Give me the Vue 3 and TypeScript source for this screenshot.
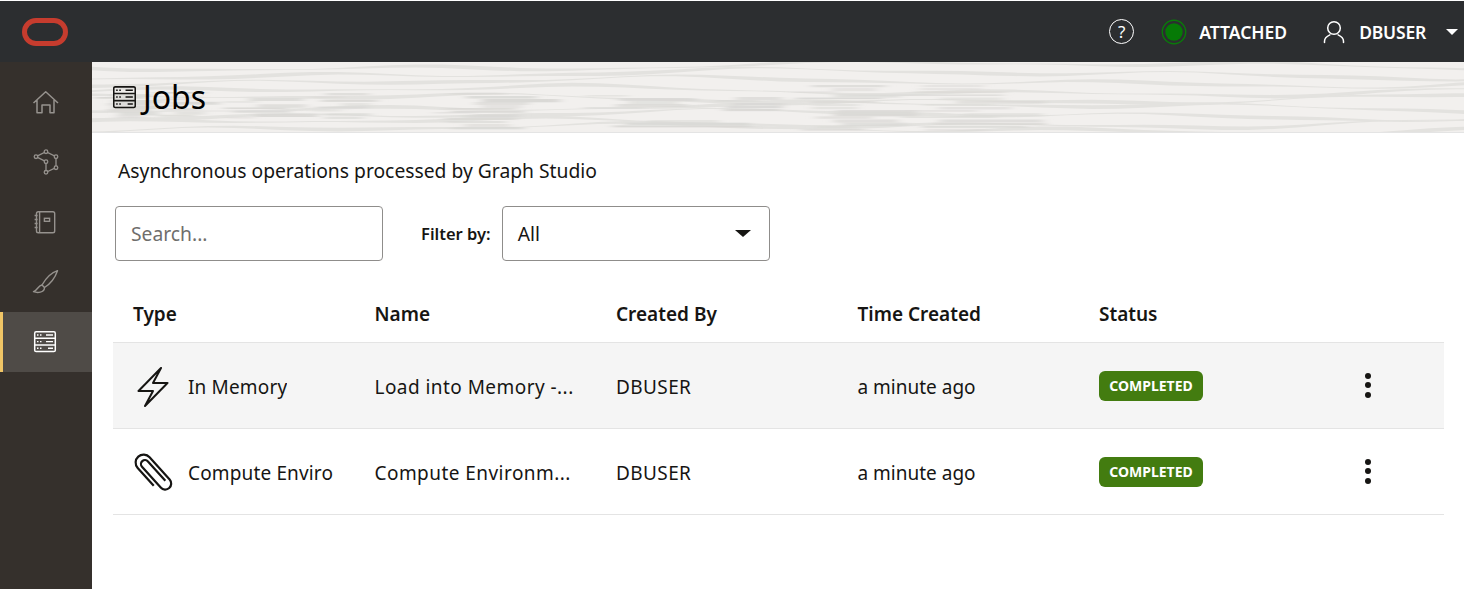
<script setup lang="ts">
interface Job { type: string; name: string; by: string; time: string; icon: 'bolt' | 'clip'; hover: boolean }
const jobs: Job[] = [
  { type: 'In Memory', name: 'Load into Memory -...', by: 'DBUSER', time: 'a minute ago', icon: 'bolt', hover: true },
  { type: 'Compute Enviro', name: 'Compute Environm...', by: 'DBUSER', time: 'a minute ago', icon: 'clip', hover: false }
]
const columns = ['Type', 'Name', 'Created By', 'Time Created', 'Status']

function rnd(n: number): number {
  const v = Math.sin(n * 127.1 + 311.7) * 43758.5453
  return v - Math.floor(v)
}
function band(base: number, seed: number): string {
  const top: string[] = []
  const bottom: string[] = []
  for (let x = -40; x <= 1420; x += 26) {
    const y = base
      + Math.sin(x / 71 + seed) * 2.4
      + Math.sin(x / 33 + seed * 2.3) * 0.9
      + Math.sin(x / 203 + seed * 0.7) * 3.4
    const t = 0.9 + 1.4 * (1 + Math.sin(x / 58 + seed * 3.1))
    top.push(`${x} ${(y - t / 2).toFixed(1)}`)
    bottom.unshift(`${x} ${(y + t / 2).toFixed(1)}`)
  }
  return `M${top.join('L')}L${bottom.join('L')}Z`
}
const bands = [
  [4, 0.4], [12, 1.6], [20, 2.7], [29, 3.9], [37, 5.0], [45, 0.9], [53, 2.1], [61, 4.4], [67, 3.2]
].map(([y, s]) => band(y, s))

interface Streak { x: number; y: number; w: number; h: number; o: number }
const regions = [
  [0, 32, 60, 24], [60, 30, 60, 26], [130, 36, 80, 22], [219, 31, 70, 27], [353, 31, 92, 24], [491, 33, 107, 15],
  [621, 35, 70, 15], [701, 23, 110, 47], [808, 23, 160, 47], [340, 50, 100, 18], [500, 58, 170, 8]
]
const streaks: Streak[] = []
regions.forEach(([rx, ry, rw, rh], r) => {
  const n = Math.round(rh / 3.2)
  for (let i = 0; i < n; i++) {
    const a = rnd(r * 17 + i)
    const b = rnd(r * 31 + i + 5)
    streaks.push({
      x: rx + a * rw * 0.45,
      y: ry + (i / n) * rh,
      w: rw * (0.35 + b * 0.5),
      h: 1.5 + a * 2,
      o: 0.45 + b * 0.5
    })
  }
})
</script>

<template>
  <div class="app">
    <header class="topbar">
      <svg class="logo" width="46" height="28" viewBox="0 0 46 28" aria-label="Oracle">
        <rect x="2.5" y="2.5" width="41" height="23" rx="11.5" fill="none" stroke="#c63c2e" stroke-width="5" />
      </svg>
      <div class="top-right">
        <span class="help">?</span>
        <svg class="status-dot" width="26" height="26" viewBox="0 0 26 26">
          <circle cx="13" cy="13" r="11.7" fill="none" stroke="#0a7a0a" stroke-width="1.4" />
          <circle cx="13" cy="13" r="8.7" fill="#067a06" />
        </svg>
        <span class="top-label attached">ATTACHED</span>
        <svg class="user" width="22" height="24" viewBox="0 0 22 24" fill="none" stroke="#fff" stroke-width="1.5" stroke-linecap="round">
          <circle cx="11" cy="8" r="6.3" />
          <path d="M1.5 22.5v-1.2c0-3 2.2-5 5.4-6.4M20.5 22.5v-1.2c0-3-2.2-5-5.4-6.4" />
        </svg>
        <span class="top-label dbuser">DBUSER</span>
        <span class="caret"></span>
      </div>
    </header>

    <div class="body">
      <nav class="sidebar">
        <div class="nav-item">
          <svg width="30" height="30" viewBox="0 0 30 30" fill="none" stroke="currentColor" stroke-width="1.5" stroke-linejoin="round">
            <path d="M3.5 16 15.7 4.7 28 16M7 13v12.7h5V18h8v7.7h4V13" />
          </svg>
        </div>
        <div class="nav-item">
          <svg width="30" height="30" viewBox="0 0 30 30" fill="currentColor" stroke="currentColor" stroke-width="1.3">
            <path fill="none" d="M6 9.7 16 4.700 26 9.700V20.700L16 25.300V14.700L6 9.700" />
            <g fill="#35302c">
              <circle cx="16" cy="4.700" r="1.800" /><circle cx="6" cy="9.700" r="1.800" /><circle cx="26" cy="9.700" r="1.800" />
              <circle cx="26" cy="20.700" r="1.800" /><circle cx="16" cy="25.300" r="1.800" /><circle cx="16" cy="14.700" r="1.800" />
            </g>
          </svg>
        </div>
        <div class="nav-item">
          <svg width="30" height="30" viewBox="0 0 30 30" fill="none" stroke="currentColor" stroke-width="1.400">
            <rect x="6.500" y="4.700" width="18.200" height="21" rx="1.800" />
            <path d="M9.600 4.700v21M4.600 8.500h3M4.600 12.500h3M4.600 16.500h3M4.600 20.500h3" />
            <rect x="14.400" y="11.300" width="5.200" height="3" />
          </svg>
        </div>
        <div class="nav-item">
          <svg width="30" height="30" viewBox="0 0 30 30" fill="none" stroke="currentColor" stroke-width="1.400" stroke-linejoin="round">
            <path d="M27.500 3.700C22 5.500 16 11 12 18l2.500 2.500C20 17 25 11 27.500 3.700Z" />
            <path d="M12 18c-4 .5-4 5-8.500 6.700C7 26 14.500 26 14.500 20.500" />
          </svg>
        </div>
        <div class="nav-item active">
          <svg width="30" height="30" viewBox="0 0 30 30" fill="none" stroke="currentColor" stroke-width="1.500">
            <rect x="4.700" y="4.800" width="20.600" height="19.800" rx="1.400" />
            <path d="M5 11.200h20M5 18h20" />
            <path d="M7 8h1.500M10 8h1.500M16 8h7M7 14.600h1.500M10 14.600h1.500M16 14.600h7M7 21.300h1.500M10 21.300h1.500M18 21.300h5" stroke-width="1.400" />
          </svg>
        </div>
      </nav>

      <main class="main">
        <section class="banner">
          <svg class="texture" width="1372" height="70" viewBox="0 0 1372 70" aria-hidden="true">
            <defs>
              <filter id="soft" x="-10%" y="-10%" width="120%" height="120%"><feGaussianBlur stdDeviation="5 0.7" /></filter>
            </defs>
            <g fill="#e3e2df">
              <path v-for="(d, i) in bands" :key="i" :d="d" />
            </g>
            <g fill="#d9d8d5" filter="url(#soft)">
              <rect v-for="(s, i) in streaks" :key="i" :x="s.x" :y="s.y" :width="s.w" :height="s.h" :opacity="s.o" />
            </g>
          </svg>
          <svg class="title-icon" width="23" height="24" viewBox="4 3 22 23" fill="none" stroke="#161513" stroke-width="1.500">
            <rect x="4.700" y="4.800" width="20.600" height="19.800" rx="1.400" />
            <path d="M5 11.200h20M5 18h20" />
            <path d="M7 8h1.500M10 8h1.500M16 8h7M7 14.600h1.500M10 14.600h1.500M16 14.600h7M7 21.300h1.500M10 21.300h1.500M18 21.300h5" stroke-width="1.400" />
          </svg>
          <h1 class="title">Jobs</h1>
        </section>

        <section class="content">
          <p class="desc">Asynchronous operations processed by Graph Studio</p>

          <div class="filters">
            <div class="field search">Search...</div>
            <span class="filter-label">Filter by:</span>
            <div class="field select">
              <span>All</span>
              <span class="select-caret"></span>
            </div>
          </div>

          <div class="table">
            <div class="row head">
              <div v-for="c in columns" :key="c" class="cell">{{ c }}</div>
            </div>
            <div v-for="j in jobs" :key="j.name" class="row item" :class="{ hover: j.hover }">
              <div class="cell type">
                <svg v-if="j.icon === 'bolt'" class="type-icon" width="40" height="40" viewBox="0 0 40 40" fill="none" stroke="#161513" stroke-width="2" stroke-linejoin="round">
                  <path d="M28 1 5.500 24H20L12 39 34.500 16H20Z" />
                </svg>
                <svg v-else class="type-icon" width="40" height="40" viewBox="-20 -20 40 40" fill="none" stroke="#161513" stroke-width="2.200">
                  <path transform="rotate(48)" d="M14-4H-12a4 4 0 0 0 0 8H16a6 6 0 0 0 0-12H-14a8 8 0 0 0 0 16H10" />
                </svg>
                <span class="clip">{{ j.type }}</span>
              </div>
              <div class="cell name">{{ j.name }}</div>
              <div class="cell by">{{ j.by }}</div>
              <div class="cell">{{ j.time }}</div>
              <div class="cell"><span class="badge">COMPLETED</span></div>
              <div class="kebab"><i></i><i></i><i></i></div>
            </div>
          </div>
        </section>
      </main>
    </div>
  </div>
</template>

<style>
html, body { margin: 0; background: #fff; }
</style>

<style scoped>
.app {
  width: 1464px;
  height: 589px;
  overflow: hidden;
  display: flex;
  flex-direction: column;
  font-family: "Noto Sans", "Open Sans", sans-serif;
  color: #161513;
}
.topbar {
  height: 61px;
  margin-top: 1px;
  flex: none;
  background: #2c2e30;
  display: flex;
  align-items: center;
  justify-content: space-between;
  padding: 0 6px 0 22px;
}
.logo { display: block; }
.top-right { display: flex; align-items: center; color: #fff; }
.help {
  width: 25px;
  height: 25px;
  box-sizing: border-box;
  border: 1.5px solid #fff;
  border-radius: 50%;
  display: flex;
  align-items: center;
  justify-content: center;
  font-size: 17px;
  line-height: 1;
  margin-right: 27px;
}
.status-dot { margin-right: 12px; }
.top-label { font-size: 17.500px; font-weight: 600; }
.attached { margin-right: 36px; }
.user { margin-right: 14px; }
.dbuser { margin-right: 20px; letter-spacing: -0.2px; }
.caret {
  width: 0;
  height: 0;
  border-left: 6px solid transparent;
  border-right: 6px solid transparent;
  border-top: 6px solid #fff;
}
.body { flex: 1; display: flex; min-height: 0; }
.sidebar {
  width: 92px;
  flex: none;
  background: #35302c;
  padding-top: 10px;
  box-sizing: border-box;
}
.nav-item {
  height: 60px;
  display: flex;
  align-items: center;
  justify-content: center;
  padding-right: 2px;
  box-sizing: border-box;
  color: #96928e;
}
.nav-item.active {
  background: #4f4b47;
  border-left: 3px solid #f0c566;
  padding-right: 5px;
  color: #fff;
}
.main { flex: 1; min-width: 0; display: flex; flex-direction: column; }
.banner {
  position: relative;
  height: 71px;
  flex: none;
  box-sizing: border-box;
  background: #f2f0ee;
  border-bottom: 1px solid #e4e4e4;
  display: flex;
  align-items: center;
  padding: 0 0 0 21px;
  overflow: hidden;
}
.texture { position: absolute; left: 0; top: 0; }
.title-icon { position: relative; margin-right: 7px; }
.title {
  position: relative;
  margin: 0;
  font-size: 32px;
  font-weight: 400;
  line-height: 1;
  color: #000;
}
.content { padding: 0 20px 0 21px; }
.desc {
  margin: 26px 0 0 5px;
  font-size: 19.300px;
  line-height: 24px;
}
.filters { display: flex; align-items: center; margin: 23px 0 0 2px; }
.field {
  height: 55px;
  width: 268px;
  box-sizing: border-box;
  border: 1px solid #8f8d8b;
  border-radius: 4px;
  display: flex;
  align-items: center;
  padding: 0 15px;
  font-size: 19.300px;
}
.search { color: #6f6e6c; }
.filter-label { margin: 0 11px 0 38px; font-size: 16.500px; font-weight: 600; }
.select { justify-content: space-between; padding-right: 18px; }
.select-caret {
  width: 0;
  height: 0;
  border-left: 8px solid transparent;
  border-right: 8px solid transparent;
  border-top: 7px solid #161513;
}
.table { width: 1331px; }
.row {
  display: grid;
  grid-template-columns: repeat(5, 241.500px) 1fr;
  padding-left: 20px;
  align-items: center;
  box-sizing: border-box;
  font-size: 19px;
}
.head {
  height: 82px;
  padding-top: 24px;
  border-bottom: 1px solid #e4e4e4;
  font-weight: 600;
}
.item {
  height: 86px;
  padding-top: 2px;
  border-bottom: 1px solid #e4e4e4;
}
.hover { background: #f5f5f5; }
.cell { white-space: nowrap; min-width: 0; }
.name { letter-spacing: 0.450px; }
.by { letter-spacing: 0.400px; }
.type { display: flex; align-items: center; gap: 15px; }
.type-icon { flex: none; }
.clip { display: block; overflow: hidden; letter-spacing: 0.150px; }
.badge {
  display: inline-flex;
  align-items: center;
  justify-content: center;
  height: 30px;
  width: 104px;
  margin-top: -2px;
  background: #437c10;
  border-radius: 6px;
  color: #fff;
  font-size: 14px;
  font-weight: 700;
  vertical-align: middle;
}
.kebab {
  display: flex;
  flex-direction: column;
  gap: 3.500px;
  width: 6px;
  justify-self: start;
  margin: -3px 0 0 24.500px;
}
.kebab i {
  display: block;
  width: 6px;
  height: 6px;
  border-radius: 50%;
  background: #161513;
}
</style>
